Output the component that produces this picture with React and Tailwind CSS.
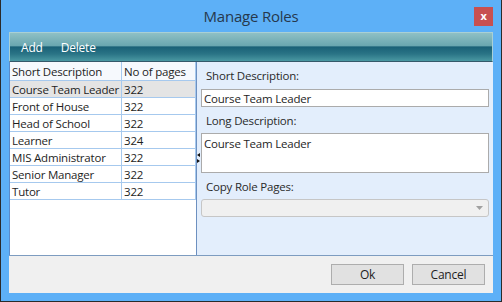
import React from 'react';

const roles = [
  { name: 'Course Team Leader', pages: 322 },
  { name: 'Front of House', pages: 322 },
  { name: 'Head of School', pages: 322 },
  { name: 'Learner', pages: 324 },
  { name: 'MIS Administrator', pages: 322 },
  { name: 'Senior Manager', pages: 322 },
  { name: 'Tutor', pages: 322 },
];

const font = { fontFamily: '"Open Sans", "Noto Sans", sans-serif' };

export default function App() {
  const selected = 0;

  return (
    <div
      className="w-[502px] h-[302px] bg-[#5db0f7] border-x border-b border-[#2a2a2a] flex flex-col text-[11.5px] tracking-[-0.2px] text-[#1e1e1e]"
      style={font}
    >
      {/* title bar */}
      <div className="relative h-[32px] shrink-0 flex items-center justify-center">
        <span className="text-[15px] text-[#26384d] tracking-[-0.2px]">Manage Roles</span>
        <div className="absolute top-[7px] right-[8px] w-[19px] h-[19px] bg-[#c75050] flex items-center justify-center text-white text-[11px] font-bold leading-none pb-[2px]">
          x
        </div>
      </div>

      <div className="mx-[8px] flex flex-col flex-1">
        {/* toolbar */}
        <div className="h-[30px] shrink-0 border border-[#a9d0d6] border-b-[#35596a] bg-[linear-gradient(to_bottom,#8fc0c5_0%,#6aa7b0_45%,#1a6177_50%,#2a7486_75%,#4a98a2_100%)] flex items-center gap-[18px] pl-[11px] pt-[1px] text-white text-[12px]">
          <span>Add</span>
          <span>Delete</span>
        </div>

        {/* content */}
        <div className="h-[193px] shrink-0 flex">
          {/* list */}
          <div className="w-[187px] bg-white border-l border-[#5a8bcb] flex flex-col">
            <div className="h-[19px] flex border-b border-[#a6c9ee] bg-[#f6f9fd]">
              <div className="w-[112px] border-r border-[#a6c9ee] pl-[2px] pt-[1px] flex items-center">Short Description</div>
              <div className="flex-1 border-r border-[#a6c9ee] pl-[2px] pt-[1px] flex items-center">No of pages</div>
            </div>
            {roles.map((r, i) => (
              <div
                key={r.name}
                className={`h-[17px] flex border-b border-[#a6c9ee] ${i === selected ? 'bg-[#e4e4e4]' : 'bg-white'}`}
              >
                <div className="w-[112px] border-r border-[#a6c9ee] pl-[2px] pt-[1px] flex items-center whitespace-nowrap">{r.name}</div>
                <div className="flex-1 border-r border-[#a6c9ee] pl-[2px] pt-[1px] flex items-center">{r.pages}</div>
              </div>
            ))}
          </div>

          {/* detail panel */}
          <div className="relative flex-1 bg-[#e3eefc] border-l border-[#6d90c0] px-[4px] flex flex-col">
            <svg className="absolute left-[0px] top-[91px]" width="4" height="10" viewBox="0 0 4 10">
              <path d="M0 2 L3 0 L3 4 Z" fill="#111" />
              <path d="M3 8 L0 6 L0 10 Z" fill="#111" />
            </svg>
            <div className="h-[27px] flex items-center pl-[5px] pt-[1px] text-[#2a2a2a]">Short Description:</div>
            <div className="h-[18px] bg-white border border-[#ababab] flex items-center pl-[2px] pt-[1px]">Course Team Leader</div>
            <div className="h-[26px] flex items-center pl-[5px] pt-[1px] text-[#2a2a2a]">Long Description:</div>
            <div className="h-[40px] bg-white border border-[#ababab] pl-[2px] leading-[17px] pt-[1px]">Course Team Leader</div>
            <div className="h-[26px] flex items-center pl-[5px] pt-[1px] text-[#2a2a2a]">Copy Role Pages:</div>
            <div className="h-[18px] bg-[#f0f0f0] border border-[#c6c6c6] rounded-[3px] flex items-center justify-end pr-[5px]">
              <svg width="7" height="4" viewBox="0 0 7 4">
                <path d="M0 0 L7 0 L3.5 4 Z" fill="#a0a0a0" />
              </svg>
            </div>
          </div>
        </div>

        {/* button bar */}
        <div className="h-[38px] shrink-0 bg-[#f0f0f0] border-t border-[#7d9cc0] flex justify-end items-start pt-[8px] pr-[8px] gap-[8px]">
          <button className="w-[73px] h-[21px] bg-[#e1e1e1] border border-[#adadad] text-[12px] text-[#1e1e1e] leading-none">Ok</button>
          <button className="w-[73px] h-[21px] bg-[#e1e1e1] border border-[#adadad] text-[12px] text-[#1e1e1e] leading-none">Cancel</button>
        </div>
      </div>
      <div className="h-[8px] shrink-0" />
    </div>
  );
}
